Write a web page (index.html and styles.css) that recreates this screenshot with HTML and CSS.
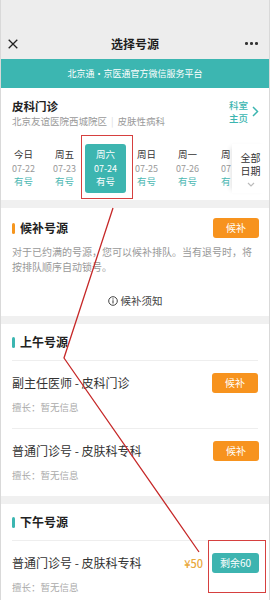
FILE: index.html
```html
<!DOCTYPE html>
<html lang="zh-CN">
<head>
<meta charset="utf-8">
<title>选择号源</title>
<link rel="stylesheet" href="styles.css">
</head>
<body>
<div class="app">
  <header class="nav">
    <div class="nav-row">
      <svg class="nav-close" width="10" height="10" viewBox="0 0 10 10"><path d="M0.7 0.7L9.3 9.3M9.3 0.7L0.7 9.3" stroke="#222" stroke-width="1.3" fill="none"/></svg>
      <div class="nav-title">选择号源</div>
      <div class="nav-more"><i></i><i></i><i></i></div>
    </div>
  </header>
  <div class="banner">北京通·京医通官方微信服务平台</div>

  <section class="dept">
    <div class="dept-info">
      <div class="dept-name">皮科门诊</div>
      <div class="dept-sub">北京友谊医院西城院区<span class="sep">|</span>皮肤性病科</div>
    </div>
    <div class="dept-link">
      <div class="dept-link-text">科室<br>主页</div>
      <svg width="7" height="11" viewBox="0 0 7 11"><path d="M1 1L5.5 5.5L1 10" stroke="#3bb5b0" stroke-width="1.5" fill="none"/></svg>
    </div>
  </section>

  <section class="dates">
    <div class="date-scroll">
      <div class="date-cell"><span class="d-day">今日</span><span class="d-date">07-22</span><span class="d-state">有号</span></div>
      <div class="date-cell"><span class="d-day">周五</span><span class="d-date">07-23</span><span class="d-state">有号</span></div>
      <div class="date-cell active"><span class="d-day">周六</span><span class="d-date">07-24</span><span class="d-state">有号</span></div>
      <div class="date-cell"><span class="d-day">周日</span><span class="d-date">07-25</span><span class="d-state">有号</span></div>
      <div class="date-cell"><span class="d-day">周一</span><span class="d-date">07-26</span><span class="d-state">有号</span></div>
      <div class="date-cell partial"><span class="d-day">周</span><span class="d-date">07</span><span class="d-state">有</span></div>
    </div>
    <div class="all-dates">
      <span>全部</span><span>日期</span>
      <svg width="8" height="5" viewBox="0 0 8 5"><path d="M1 1L4 4L7 1" stroke="#bbb" stroke-width="1.2" fill="none"/></svg>
    </div>
  </section>

  <section class="block">
    <div class="block-head">
      <div class="block-title"><i class="bar orange"></i>候补号源</div>
      <button class="btn orange">候补</button>
    </div>
    <p class="wait-desc">对于已约满的号源，您可以候补排队。当有退号时，将按排队顺序自动锁号。</p>
    <div class="wait-note">
      <svg width="10" height="10" viewBox="0 0 10 10"><circle cx="5" cy="5" r="4.3" stroke="#444" stroke-width="1" fill="none"/><path d="M5 4.3V7.4" stroke="#444" stroke-width="1.1"/><circle cx="5" cy="2.9" r="0.65" fill="#444"/></svg>
      <span>候补须知</span>
    </div>
  </section>

  <section class="block">
    <div class="block-head ruled">
      <div class="block-title"><i class="bar teal"></i>上午号源</div>
    </div>
    <div class="item ruled">
      <div class="item-row">
        <div class="item-name">副主任医师 - 皮科门诊</div>
        <button class="btn orange">候补</button>
      </div>
      <div class="item-skill">擅长：暂无信息</div>
    </div>
    <div class="item">
      <div class="item-row">
        <div class="item-name">普通门诊号 - 皮肤科专科</div>
        <button class="btn orange">候补</button>
      </div>
      <div class="item-skill">擅长：暂无信息</div>
    </div>
  </section>

  <section class="block">
    <div class="block-head ruled">
      <div class="block-title"><i class="bar teal"></i>下午号源</div>
    </div>
    <div class="item">
      <div class="item-row">
        <div class="item-name">普通门诊号 - 皮肤科专科</div>
        <span class="price">¥50</span>
        <button class="btn teal">剩余60</button>
      </div>
      <div class="item-skill">擅长：暂无信息</div>
    </div>
  </section>

  <svg class="marks" width="270" height="600" viewBox="0 0 270 600">
    <rect x="81.5" y="135.5" width="51" height="63" fill="none" stroke="#d6403f" stroke-width="1"/>
    <rect x="208.5" y="540.5" width="57" height="52" fill="none" stroke="#d6403f" stroke-width="1"/>
    <polyline points="113,208 64,358 199,552" fill="none" stroke="#c62828" stroke-width="1.3"/>
  </svg>
</div>
</body>
</html>
```

FILE: styles.css
```css
* { box-sizing: border-box; margin: 0; padding: 0; }
html, body { width: 270px; height: 600px; overflow: hidden; background: #f2f2f2; }
body {
  font-family: "Noto Sans CJK SC", "Noto Sans", "Liberation Sans", sans-serif;
  color: #333;
}
.app {
  position: relative;
  width: 270px;
  height: 600px;
  overflow: hidden;
  background: #f2f2f2;
  border-left: 1px solid #d9d9d9;
  border-right: 1px solid #d9d9d9;
}
.nav { background: #ededed; padding-top: 28px; height: 59px; }
.nav-row {
  height: 31px;
  display: flex;
  align-items: center;
  justify-content: space-between;
  padding: 0 11px 0 7px;
  position: relative;
}
.nav-title {
  position: absolute;
  left: 0; right: 0;
  text-align: center;
  font-size: 12px;
  font-weight: 700;
  color: #1e1e1e;
  line-height: 31px;
}
.nav-more { display: flex; gap: 2.5px; }
.nav-more i { width: 2.6px; height: 2.6px; border-radius: 50%; background: #333; display: block; }
.banner {
  height: 29px;
  background: #3cb6b1;
  color: #fff;
  font-size: 9px;
  line-height: 29px;
  text-align: center;
}
.dept {
  background: #fff;
  display: flex;
  justify-content: space-between;
  align-items: center;
  padding: 10px 10px 0 11px;
}
.dept-name { font-size: 11.5px; font-weight: 700; line-height: 16px; color: #222; }
.dept-sub { font-size: 9.5px; color: #9a9a9a; line-height: 15px; }
.sep { color: #ddd; margin: 0 4px; }
.dept-link { display: flex; align-items: center; gap: 4px; margin-top: -4px; }
.dept-link-text { color: #3bb5b0; font-size: 9.5px; line-height: 13px; font-weight: 500; }
.dates {
  background: #fff;
  display: flex;
  padding: 15px 0 7px 2px;
  border-bottom: 8px solid #f0f0f0;
  height: 79px;
}
.date-scroll { display: flex; width: 229px; overflow: hidden; flex: none; }
.date-cell {
  flex: 0 0 41px;
  height: 49px;
  display: flex;
  flex-direction: column;
  align-items: center;
  justify-content: center;
  border-radius: 3px;
  line-height: 13.5px;
}
.date-cell.partial { flex: 0 0 24px; align-items: flex-start; padding-left: 13px; }
.d-day { font-size: 9.5px; color: #333; }
.d-date { font-size: 9px; color: #999; }
.d-state { font-size: 9.5px; color: #4bb8b3; }
.date-cell.active { background: #3db5b0; }
.date-cell.active span { color: #fff; }
.all-dates {
  flex: 1;
  display: flex;
  flex-direction: column;
  align-items: center;
  justify-content: center;
  font-size: 10px;
  line-height: 13.5px;
  color: #333;
  box-shadow: -4px 0 5px -3px rgba(0,0,0,0.12);
  height: 49px;
}
.all-dates svg { margin-top: 4px; }
.block { background: #fff; border-bottom: 8px solid #f0f0f0; }
.block-head {
  display: flex;
  align-items: center;
  justify-content: space-between;
  padding: 10px 10px 0 11px;
  height: 30px;
}
.block-head.ruled { height: 37px; padding-top: 10px; padding-bottom: 10px; align-items: flex-start; }
.ruled { border-bottom: 1px solid #eee; }
.block-head.ruled, .item.ruled { margin: 0 11px 0 11px; padding-left: 0; padding-right: 0; }
.block-title {
  display: flex;
  align-items: center;
  font-size: 12px;
  font-weight: 700;
  color: #222;
  line-height: 16px;
}
.bar { display: block; width: 3px; height: 11px; border-radius: 1.5px; margin-right: 5px; }
.bar.orange { background: #f6961e; }
.bar.teal { background: #3cb6b1; }
.btn {
  border: 0;
  border-radius: 3px;
  height: 20px;
  width: 46px;
  color: #fff;
  font-family: inherit;
  font-size: 10px;
  line-height: 20px;
  text-align: center;
}
.btn.orange { background: #f7931e; }
.btn.teal { background: #3db4b0; width: 47px; }
.wait-desc {
  font-size: 10px;
  color: #999;
  line-height: 14.5px;
  padding: 7px 11px 0 11px;
}
.wait-note {
  display: flex;
  align-items: center;
  justify-content: center;
  gap: 3px;
  font-size: 10.5px;
  color: #444;
  line-height: 16px;
  padding: 19px 0 7px;
}
.item { padding: 12px 10px 14px 11px; }
.item.ruled { padding-top: 12px; padding-bottom: 14px; }
.item-row { display: flex; align-items: center; height: 20px; }
.item-name { flex: 1; font-size: 12px; color: #333; line-height: 20px; }
.item-skill { font-size: 9.5px; color: #aaa; line-height: 14px; margin-top: 7px; }
.price { font-size: 11px; color: #e9a83c; margin-right: 9px; font-weight: 500; }
.marks { position: absolute; left: -1px; top: 0; pointer-events: none; }
```
